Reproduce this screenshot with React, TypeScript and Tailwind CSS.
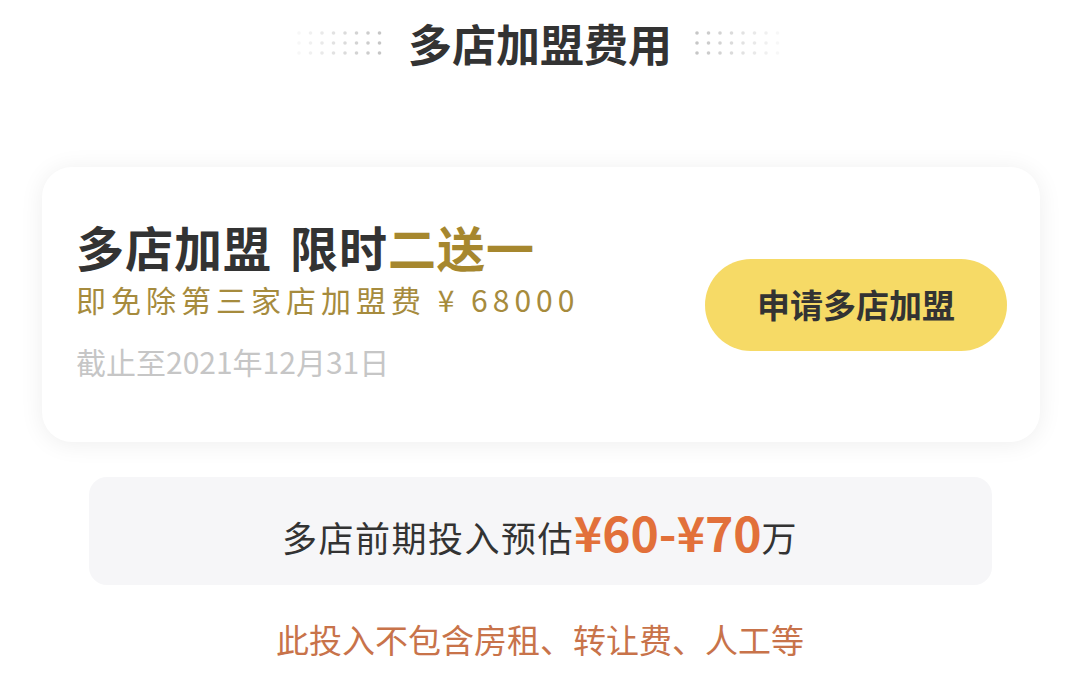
import React from 'react'

const font = { fontFamily: '"Noto Sans CJK SC", "Noto Sans", sans-serif' }

// 3x8 dot grid beside the section title, fading away from the text
function DotGrid({ side }: { side: 'left' | 'right' }) {
  const cols = Array.from({ length: 8 }, (_, i) => i)
  const rows = [0, 1, 2]
  return (
    <svg width="90" height="30" viewBox="0 0 90 30" aria-hidden="true">
      {rows.map((r) =>
        cols.map((c) => {
          const near = side === 'left' ? c : 7 - c
          const opacity = 0.08 + near * 0.07
          return (
            <circle
              key={`${r}-${c}`}
              cx={3 + c * 11.5}
              cy={5 + r * 10}
              r={1.8}
              fill="#9a9a9a"
              opacity={opacity}
            />
          )
        })
      )}
    </svg>
  )
}

export default function App() {
  return (
    <div className="w-[1080px] h-[676px] bg-white flex flex-col items-center overflow-hidden" style={font}>
      {/* Section title */}
      <div className="flex items-center gap-[22px] pt-[14px]">
        <DotGrid side="left" />
        <h1 className="text-[44px] leading-[58px] font-bold text-[#333333]">多店加盟费用</h1>
        <DotGrid side="right" />
      </div>

      {/* Offer card */}
      <div className="mt-[95px] ml-[2px] w-[998px] h-[275px] rounded-[30px] bg-white shadow-[0_2px_24px_rgba(0,0,0,0.07)] flex items-start justify-between pl-[34px] pr-[33px]">
        <div className="flex flex-col pt-[50px]">
          <p className="text-[48px] leading-[58px] font-bold tracking-[1px] text-[#333333]">
            多店加盟<span className="inline-block w-[18px]" />限时<span className="text-[#a6872e]">二送一</span>
          </p>
          <p className="text-[30px] leading-[40px] tracking-[5px] text-[#a68b3d] mt-[4px]">
            即免除第三家店加盟费 ¥ 68000
          </p>
          <p className="text-[30px] leading-[40px] text-[#c6c6c6] mt-[22px]">截止至2021年12月31日</p>
        </div>
        <button className="self-center w-[302px] h-[92px] rounded-full bg-[#f6da66] text-[33px] font-bold text-[#333333]">
          申请多店加盟
        </button>
      </div>

      {/* Estimate box */}
      <div className="mt-[35px] w-[903px] h-[108px] rounded-[18px] bg-[#f6f6f8] flex items-center justify-center">
        <p className="text-[35px] tracking-[1.5px] text-[#333333] flex items-baseline">
          多店前期投入预估
          <span className="text-[48px] font-bold tracking-[0px] text-[#e2703a]">¥60-¥70</span>万
        </p>
      </div>

      <p className="mt-[32px] text-[33px] leading-[44px] text-[#c8734a]">此投入不包含房租、转让费、人工等</p>
    </div>
  )
}
